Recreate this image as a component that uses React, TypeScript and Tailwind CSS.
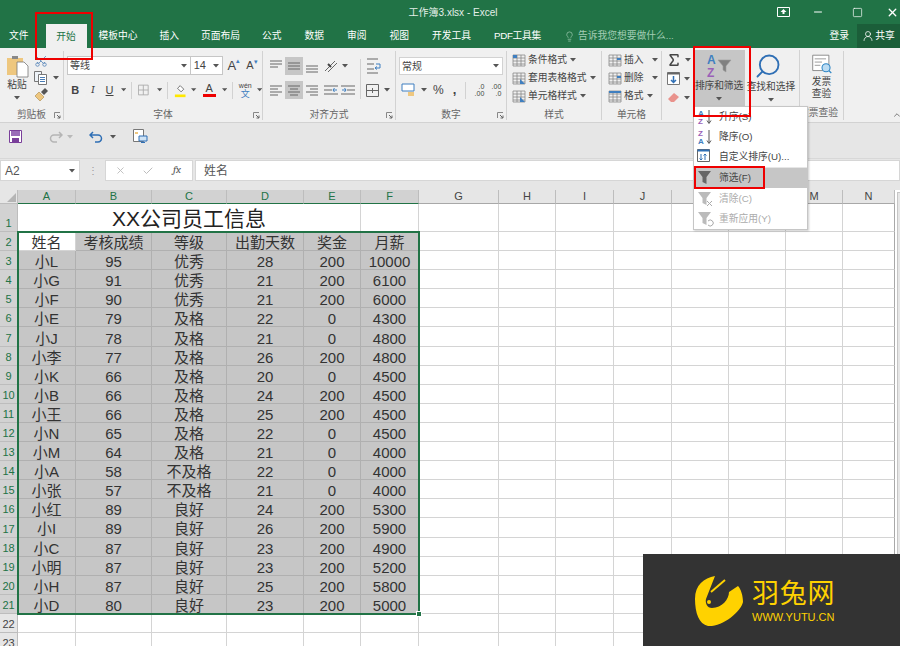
import React from 'react';
import { Scissors, Search, Lightbulb, UserRound, Sigma, X, Check, Minus, Square, ChevronUp } from 'lucide-react';

const rows = [
  ['小L', 95, '优秀', 28, 200, 10000], ['小G', 91, '优秀', 21, 200, 6100], ['小F', 90, '优秀', 21, 200, 6000],
  ['小E', 79, '及格', 22, 0, 4300], ['小J', 78, '及格', 21, 0, 4800], ['小李', 77, '及格', 26, 200, 4800],
  ['小K', 66, '及格', 20, 0, 4500], ['小B', 66, '及格', 24, 200, 4500], ['小王', 66, '及格', 25, 200, 4500],
  ['小N', 65, '及格', 22, 0, 4500], ['小M', 64, '及格', 21, 0, 4000], ['小A', 58, '不及格', 22, 0, 4000],
  ['小张', 57, '不及格', 21, 0, 4000], ['小红', 89, '良好', 24, 200, 5300], ['小I', 89, '良好', 26, 200, 5900],
  ['小C', 87, '良好', 23, 200, 4900], ['小明', 87, '良好', 23, 200, 5200], ['小H', 87, '良好', 25, 200, 5800],
  ['小D', 80, '良好', 23, 200, 5000],
];
const head = ['姓名', '考核成绩', '等级', '出勤天数', '奖金', '月薪'];
const cols = ['A', 'B', 'C', 'D', 'E', 'F', 'G', 'H', 'I', 'J', 'K', 'L', 'M', 'N'];

const Caret = ({ className = '' }: { className?: string }) => (
  <svg width="6" height="4" viewBox="0 0 6 4" className={className}><path d="M0 0h6L3 3.5z" fill="#555" /></svg>
);

const Launcher = () => (
  <svg width="7" height="7" viewBox="0 0 7 7" className="absolute right-[2px] bottom-[1px]">
    <path d="M.5 6V.5H6" fill="none" stroke="#888" />
    <path d="M3 3l3 3M6 3.500V6H3.500" fill="none" stroke="#666" />
  </svg>
);

const Group = ({ w, label, children, launcher = true }: { w: string; label: string; children: React.ReactNode; launcher?: boolean }) => (
  <div className={`relative flex flex-col h-[69px] shrink-0 border-r border-[#d2d2d2] mt-[3px] ${w}`}>
    <div className="flex-1 min-h-0">{children}</div>
    <div className="h-[12px] text-center leading-[14px] text-[#666]">{label}</div>
    {launcher && <Launcher />}
  </div>
);

const Lines = ({ kind, active = false }: { kind: string; active?: boolean }) => {
  const d: Record<string, string> = {
    top: 'M3 4h12M3 7h12M3 10h8',
    mid: 'M3 6h12M3 9h12M3 12h12',
    bot: 'M3 9h12M3 12h12M3 15h12',
    left: 'M3 5h12M3 8h8M3 11h12M3 14h8',
    center: 'M3 5h12M5 8h8M3 11h12M5 14h8',
    right: 'M3 5h12M7 8h8M3 11h12M7 14h8',
  };
  return (
    <div className={`w-[18px] h-[18px] ${active ? 'bg-[#c6c6c6]' : ''}`}>
      <svg width="18" height="18" viewBox="0 0 18 18"><path d={d[kind]} stroke="#666" fill="none" /></svg>
    </div>
  );
};

const MiniTable = ({ mark }: { mark: string }) => (
  <svg width="15" height="15" viewBox="0 0 15 15">
    <path d="M1 2h12v11H1zM1 5h12M1 8h12M1 11h12M5 2v11M9 2v11" fill="none" stroke="#888" strokeWidth=".8" />
    <path d={mark} fill="#3f7fc0" />
  </svg>
);

const SortAZ = () => (
  <svg width="18" height="18" viewBox="0 0 18 18">
    <text x="1" y="8" fontSize="8" fontWeight="700" fill="#3f7fc0" fontFamily="Liberation Sans">A</text>
    <text x="1" y="16" fontSize="8" fontWeight="700" fill="#9a5fb8" fontFamily="Liberation Sans">Z</text>
    <path d="M12 2v13M10 12.500l2 3 2-3" fill="none" stroke="#555" />
  </svg>
);

const SortZA = () => (
  <svg width="18" height="18" viewBox="0 0 18 18">
    <text x="1" y="8" fontSize="8" fontWeight="700" fill="#9a5fb8" fontFamily="Liberation Sans">Z</text>
    <text x="1" y="16" fontSize="8" fontWeight="700" fill="#3f7fc0" fontFamily="Liberation Sans">A</text>
    <path d="M12 2v13M10 12.500l2 3 2-3" fill="none" stroke="#555" />
  </svg>
);

const Funnel = ({ color, mark }: { color: string; mark?: string }) => (
  <svg width="18" height="18" viewBox="0 0 18 18">
    <path d="M1 2h13L9.500 8v7l-4-2V8z" fill={color} />
    {mark && <path d={mark} fill="none" stroke="#aaa" />}
  </svg>
);

const MenuItem = ({ icon, label, disabled = false, active = false, h }: { icon: React.ReactNode; label: string; disabled?: boolean; active?: boolean; h: string }) => (
  <div className={`flex items-center ${h} ${active ? 'bg-[#c6c6c6]' : ''} ${disabled ? 'text-[#ababab]' : 'text-[#444]'}`}>
    <div className="w-[25px] pl-[3px] shrink-0">{icon}</div>
    <span className="pt-[1px]">{label}</span>
  </div>
);

const StyleRow = ({ icon, label }: { icon: React.ReactNode; label: string }) => (
  <div className="flex items-center h-[18px] gap-[1px] whitespace-nowrap">
    {icon}
    <span>{label}</span>
    <Caret className="ml-[2px]" />
  </div>
);

export default function App() {
  return (
    <div
      className="relative w-[900px] h-[646px] overflow-hidden bg-white text-[9.750px] text-[#444]"
      style={{ fontFamily: '"Liberation Sans", "Noto Sans CJK SC", sans-serif' }}
    >
      {/* title bar */}
      <div className="relative h-[24px] bg-[#217346] flex items-center justify-center text-[#e4efe8]">
        <span className="ml-[6px] text-[10px]">工作簿3.xlsx - Excel</span>
        <div className="absolute right-0 top-0 h-full flex items-center text-white">
          <svg width="13" height="10" viewBox="0 0 13 10" className="mr-[22px]">
            <path d="M.5.5h12v9H.5z" fill="none" stroke="#fff" />
            <path d="M6.500 2l3 3h-6zM5.500 5h2v2h-2z" fill="#fff" />
          </svg>
          <Minus size={12} strokeWidth={2} className="mr-[28px]" />
          <Square size={11} strokeWidth={1.500} className="mr-[23px]" />
          <X size={13} strokeWidth={2.500} className="mr-[1px]" />
        </div>
      </div>

      {/* tabs */}
      <div className="relative h-[24px] bg-[#217346] flex items-center text-white pl-[9px] whitespace-nowrap">
        <span>文件</span>
        <div className="ml-[17px] h-full w-[41px] pt-[3px] bg-[#f0f0f0] text-[#217346] flex items-center justify-center">开始</div>
        <span className="ml-[12px]">模板中心</span>
        <span className="ml-[22px]">插入</span>
        <span className="ml-[22px]">页面布局</span>
        <span className="ml-[22px]">公式</span>
        <span className="ml-[23px]">数据</span>
        <span className="ml-[23px]">审阅</span>
        <span className="ml-[23px]">视图</span>
        <span className="ml-[23px]">开发工具</span>
        <span className="ml-[23px] tracking-[-0.300px]">PDF工具集</span>
        <div className="ml-[23px] flex items-center gap-[3px] text-[#a3cdb4]">
          <Lightbulb size={11} strokeWidth={1.500} />
          <span>告诉我您想要做什么...</span>
        </div>
        <div className="absolute right-0 top-0 h-full flex items-center">
          <span className="mr-[8px]">登录</span>
          <div className="h-full w-[43px] bg-[#1b5e39] flex items-center justify-center gap-[1px]">
            <UserRound size={12} strokeWidth={1.500} />
            <span>共享</span>
          </div>
        </div>
      </div>

      {/* ribbon */}
      <div className="relative h-[75px] bg-[#f0f0f0] border-b border-[#d2d2d2] flex items-start whitespace-nowrap">
        <Group w="w-[64px]" label="剪贴板">
          <div className="flex pl-[5px] pt-[3px]">
            <div className="flex flex-col items-center w-[24px]">
              <svg width="23" height="24" viewBox="0 0 23 24">
                <path d="M1 4h16v17H1z" fill="#eec77f" />
                <path d="M6 2h6v3H6z" fill="#888" />
                <path d="M11 8h7l4 4v11H11z" fill="#fff" stroke="#777" strokeWidth=".8" />
              </svg>
              <span className="mt-[1px] leading-[12px]">粘贴</span>
              <Caret className="mt-[5px]" />
            </div>
            <div className="ml-[5px] flex flex-col gap-[3px] pt-[0px]">
              <Scissors size={14} strokeWidth={1.300} className="text-[#4a7db5] rotate-[-90deg]" />
              <div className="flex items-center gap-[6px]">
                <svg width="13" height="14" viewBox="0 0 13 14">
                  <path d="M.5.5h7v10h-7z" fill="#eef3f8" stroke="#777" />
                  <path d="M4.500 3.500h8v10h-8z" fill="#fff" stroke="#777" />
                  <path d="M6 6.500h5M6 8.500h5M6 10.500h5" stroke="#4a7db5" />
                </svg>
                <Caret />
              </div>
              <svg width="14" height="14" viewBox="0 0 14 14">
                <path d="M1 8l4-4 5 5-4 4z" fill="#eec77f" stroke="#a8864a" strokeWidth=".6" />
                <path d="M7 4l4-4 3 3-4 4z" fill="#555" />
              </svg>
            </div>
          </div>
        </Group>

        <Group w="w-[199px]" label="字体">
          <div className="flex items-center pl-[3px] pt-[3px] h-[26px]">
            <div className="w-[125px] h-[19px] bg-white border border-[#c6c6c6] flex items-center justify-between pl-[2px] pr-[3px] text-[10px]">
              <span>等线</span>
              <Caret />
            </div>
            <div className="w-[33px] h-[19px] bg-white border border-l-0 border-[#c6c6c6] flex items-center justify-between pl-[3px] pr-[3px] text-[11px]">
              <span>14</span>
              <Caret />
            </div>
            <div className="ml-[4px] flex items-baseline w-[18px] text-[13px] text-[#444]">A<span className="text-[#3f7fc0] text-[7px] self-start">▴</span></div>
            <div className="ml-[1px] flex items-baseline w-[16px] text-[11px] text-[#444]">A<span className="text-[#3f7fc0] text-[7px] self-start">▾</span></div>
          </div>
          <div className="flex items-center pl-[6px] h-[26px] text-[11px]">
            <b className="w-[12px] text-center">B</b>
            <i className="ml-[7px] w-[12px] text-center font-serif">I</i>
            <u className="ml-[6px] w-[12px] text-center">U</u>
            <Caret className="ml-[6px]" />
            <div className="ml-[5px] w-px h-[17px] bg-[#d2d2d2]" />
            <svg width="12" height="12" viewBox="0 0 12 12" className="ml-[6px]"><path d="M.5.500h11v11H.5zM6 .5v11M.5 6h11" fill="none" stroke="#aaa" /></svg>
            <Caret className="ml-[8px]" />
            <div className="ml-[5px] w-px h-[17px] bg-[#d2d2d2]" />
            <svg width="14" height="15" viewBox="0 0 14 15" className="ml-[6px]">
              <path d="M4 5l3-3 4 4-3 3z" fill="#fff" stroke="#666" />
              <path d="M1 12h12v3H1z" fill="#ffe800" />
            </svg>
            <Caret className="ml-[5px]" />
            <div className="ml-[6px] w-[13px] h-[16px] flex flex-col items-center">
              <span className="leading-[12px] text-[11px]">A</span>
              <div className="w-[13px] h-[3px] bg-[#ee0000]" />
            </div>
            <Caret className="ml-[6px]" />
            <div className="ml-[5px] w-px h-[17px] bg-[#d2d2d2]" />
            <div className="ml-[6px] w-[14px] flex flex-col items-center leading-[8px] text-[7px]">
              <span>wén</span>
              <span className="text-[#3f7fc0] text-[9px]">文</span>
            </div>
            <Caret className="ml-[5px]" />
          </div>
        </Group>

        <Group w="w-[133px]" label="对齐方式">
          <div className="flex pl-[4px] pt-[6px]">
            <div className="grid grid-cols-[18px_18px_18px] gap-y-[6px]">
              <Lines kind="top" /><Lines kind="mid" active /><Lines kind="bot" />
              <Lines kind="left" /><Lines kind="center" active /><Lines kind="right" />
            </div>
            <div className="ml-[3px] flex flex-col gap-[6px]">
              <div className="flex items-center gap-[3px] h-[18px]">
                <svg width="15" height="14" viewBox="0 0 15 14"><path d="M1 12L11 2M4 13l9-9" stroke="#666" fill="none" /><path d="M4 5l3 3" stroke="#444" strokeWidth="2" /></svg>
                <Caret />
              </div>
              <div className="flex items-center gap-[3px] h-[18px]">
                <svg width="14" height="12" viewBox="0 0 14 12"><path d="M0 2h14M0 6h8M0 10h14" stroke="#666" /><path d="M13 6H9M10.500 4L9 6l1.500 2" stroke="#3f7fc0" fill="none" /></svg>
                <svg width="14" height="12" viewBox="0 0 14 12"><path d="M0 2h14M6 6h8M0 10h14" stroke="#666" /><path d="M1 6h4M3.500 4L5 6 3.500 8" stroke="#3f7fc0" fill="none" /></svg>
              </div>
            </div>
            <div className="ml-[5px] mt-[2px] h-[40px] w-px bg-[#d2d2d2]" />
            <div className="ml-[5px] flex flex-col gap-[6px]">
              <svg width="16" height="18" viewBox="0 0 16 18"><path d="M1 2h11M1 7h7M1 12h7M1 16h11" stroke="#666" fill="none" /><path d="M10 7h4v4h-5M11 9.500l-2 1.500 2 1.500" stroke="#3f7fc0" fill="none" /></svg>
              <div className="flex items-center gap-[5px] h-[18px]">
                <svg width="13" height="13" viewBox="0 0 13 13"><path d="M.5.500h12v12H.5zM.5 6.500h12M6.500 4v5" fill="none" stroke="#666" /></svg>
                <Caret />
              </div>
            </div>
          </div>
        </Group>

        <Group w="w-[111px]" label="数字">
          <div className="pl-[3px] pt-[6px]">
            <div className="w-[104px] h-[18px] bg-white border border-[#d2d2d2] flex items-center justify-between pl-[2px] pr-[3px] text-[10px]">
              <span>常规</span>
              <Caret />
            </div>
            <div className="flex items-center mt-[6px] h-[18px]">
              <svg width="15" height="14" viewBox="0 0 15 14" className="ml-[2px]"><path d="M1 1h12v7H1z" fill="#fff" stroke="#3f7fc0" /><path d="M7 9h6v4H7z" fill="#eec77f" /></svg>
              <Caret className="ml-[5px]" />
              <span className="ml-[6px] text-[12px]">%</span>
              <span className="ml-[9px] text-[13px] font-bold leading-[10px]">,</span>
              <div className="ml-[9px] w-px h-[17px] bg-[#d2d2d2]" />
              <span className="ml-[6px] w-[12px] text-[7px] leading-[7px] text-right">.0<br />.00</span>
              <span className="ml-[5px] w-[12px] text-[7px] leading-[7px] text-right">.00<br />.0</span>
            </div>
          </div>
        </Group>

        <Group w="w-[95px]" label="样式" launcher={false}>
          <div className="pl-[5px] flex flex-col">
            <StyleRow icon={<MiniTable mark="M1 2h4v3H1z" />} label="条件格式" />
            <StyleRow icon={<MiniTable mark="M8 8l5 5H8z" />} label="套用表格格式" />
            <StyleRow icon={<MiniTable mark="M8 8l5 5H8z" />} label="单元格样式" />
          </div>
        </Group>

        <Group w="w-[60px]" label="单元格" launcher={false}>
          <div className="pl-[6px] flex flex-col">
            <div className="flex items-center h-[18px] gap-[1px]"><MiniTable mark="M9 5h4v2H9z" /><span>插入</span><Caret className="ml-[7px]" /></div>
            <div className="flex items-center h-[18px] gap-[1px]"><MiniTable mark="M9 5h4v2H9z" /><span>删除</span><Caret className="ml-[7px]" /></div>
            <div className="flex items-center h-[18px] gap-[1px]"><MiniTable mark="M1 2h12v2H1z" /><span>格式</span><Caret className="ml-[2px]" /></div>
          </div>
        </Group>

        <div className="relative h-[69px] w-[138px] shrink-0 border-r border-[#d2d2d2] mt-[2px] flex">
          <div className="w-[31px] pl-[4px] pt-[1px] flex flex-col">
            <div className="flex items-center h-[18px] gap-[3px]"><Sigma size={16} strokeWidth={2.200} /><Caret /></div>
            <div className="flex items-center h-[18px] gap-[4px] pl-[1px] pt-[1px]">
              <svg width="13" height="13" viewBox="0 0 13 13"><path d="M.5.500h12v12H.5z" fill="#fff" stroke="#777" /><path d="M.5.500h12v2H.5z" fill="#666" /><path d="M6.500 4v6.500M4 8l2.500 2.500L9 8" stroke="#2f6fb5" strokeWidth="1.500" fill="none" /></svg>
              <Caret />
            </div>
            <div className="flex items-center h-[18px] gap-[4px] pl-[1px] pt-[3px]">
              <svg width="13" height="11" viewBox="0 0 13 11"><path d="M1 7l6-6 5 4-5 5H4z" fill="#e9928c" /></svg>
              <Caret />
            </div>
          </div>
          <div className="w-[52px] h-[56px] bg-[#c6c6c6] flex flex-col items-center pt-[3px]">
            <svg width="26" height="26" viewBox="0 0 26 26">
              <text x="1" y="11" fontSize="12" fontWeight="700" fill="#3f7fc0" fontFamily="Liberation Sans">A</text>
              <text x="1" y="24" fontSize="12" fontWeight="700" fill="#9a5fb8" fontFamily="Liberation Sans">Z</text>
              <path d="M12 7h13l-5 6v6l-3-2v-4z" fill="#808080" stroke="#9c9c9c" strokeWidth=".6" />
            </svg>
            <span className="mt-[1px] leading-[12px] tracking-[-0.100px]">排序和筛选</span>
            <Caret className="mt-[5px]" />
          </div>
          <div className="w-[52px] flex flex-col items-center pt-[2px]">
            <Search size={28} strokeWidth={1.600} className="mr-[6px] mb-[1px] text-[#2f6fb5] scale-x-[-1]" />
            <span className="leading-[12px]">查找和选择</span>
            <Caret className="mt-[5px]" />
          </div>
        </div>

        <div className="relative h-[69px] w-[44px] shrink-0 border-r border-[#d2d2d2] mt-[3px] flex flex-col items-center">
          <svg width="26" height="26" viewBox="0 0 26 26" className="mt-[3px]">
            <path d="M1.500 1.500h20v19h-20z" fill="#fff" stroke="#777" />
            <path d="M4 6h14M4 10h9M4 14h7" stroke="#888" />
            <circle cx="18" cy="17" r="5" fill="#bcdcf3" stroke="#2f86c5" strokeWidth="1.300" />
            <path d="M21.500 20.500l3 3" stroke="#2f86c5" strokeWidth="1.500" />
          </svg>
          <span className="mt-[1px] leading-[12px]">发票</span>
          <span className="leading-[12px]">查验</span>
          <span className="mt-[5px] leading-[15px] text-[#666] ml-[-6px]">发票查验</span>
        </div>
        <ChevronUp size={10} strokeWidth={2} className="absolute right-[-2px] bottom-[2px] text-[#666]" />
      </div>

      {/* quick access */}
      <div className="h-[36px] bg-[#e6e6e6] border-b border-[#d8d8d8] flex items-center pl-[9px] pb-[8px]">
        <svg width="13" height="13" viewBox="0 0 13 13">
          <path d="M.5.500h12v12H.5z" fill="#fff" stroke="#7a3f9a" />
          <path d="M2 1h9v5H2z" fill="#9a6cb8" />
          <path d="M3 8h7v4H3z" fill="#7a3f9a" />
        </svg>
        <svg width="14" height="12" viewBox="0 0 14 12" className="ml-[27px]"><path d="M13 4H5a3.500 3.500 0 0 0 0 7h3M10 1l3 3-3 3" fill="none" stroke="#b5b5b5" strokeWidth="1.500" /></svg>
        <Caret className="ml-[4px] opacity-30" />
        <svg width="14" height="12" viewBox="0 0 14 12" className="ml-[16px]"><path d="M1 4h8a3.500 3.500 0 0 1 0 7H6M4 1L1 4l3 3" fill="none" stroke="#2f6fb5" strokeWidth="1.500" /></svg>
        <Caret className="ml-[7px]" />
        <svg width="15" height="15" viewBox="0 0 15 15" className="ml-[17px]">
          <path d="M.5.500h10v12H.5z" fill="#fff" stroke="#777" />
          <path d="M6 7h8v5H6z" fill="#cfe3f5" stroke="#2f6fb5" />
          <path d="M8 13.500h4" stroke="#2f6fb5" />
          <path d="M2 3h3v2H2z" fill="#eec77f" />
        </svg>
      </div>

      {/* formula bar */}
      <div className="h-[23px] bg-[#e6e6e6] flex items-stretch py-[1px]">
        <div className="w-[80px] bg-white border border-[#d6d6d6] flex items-center justify-between pl-[4px] pr-[4px] text-[12px] text-[#555]">
          <span>A2</span>
          <Caret />
        </div>
        <div className="w-[25px] flex items-center justify-center text-[#999] text-[10px]">⋮</div>
        <div className="w-[88px] bg-white border border-[#d6d6d6] flex items-center text-[#bdbdbd]">
          <X size={11} className="ml-[9px]" />
          <Check size={12} className="ml-[16px]" />
          <span className="ml-[19px] font-serif italic text-[11px] text-[#555]">fx</span>
        </div>
        <div className="ml-[2px] flex-1 bg-white border border-[#d6d6d6] flex items-center pl-[8px] text-[12px] text-[#555]">姓名</div>
      </div>

      {/* sheet */}
      <div className="h-[8px] bg-[#e6e6e6]" />
      <div className="relative flex">
        <div className="grid grid-cols-[18px_58px_76px_75px_77px_57px_58px_80px_57px_58px_58px_57px_57px_57px_52px] grid-rows-[14px_28px] auto-rows-[19.100px] w-[895px] text-[15px] text-[#333]">
          <div className="bg-[#e6e6e6] border-r border-b border-[#bdbdbd] flex items-end justify-end pr-[1px] pb-[1px]">
            <svg width="9" height="9" viewBox="0 0 9 9"><path d="M9 0v9H0z" fill="#b5b5b5" /></svg>
          </div>
          {cols.map((c, i) => (
            <div key={c} className={`border-r border-[#bdbdbd] flex items-center justify-center text-[11px] border-b ${i < 6 ? 'bg-[#d2d2d2] text-[#217346] border-b-[#217346]' : 'bg-[#e6e6e6] text-[#444] border-b-[#a8a8a8]'}`}>{c}</div>
          ))}

          <RowHead n={1} selected />
          <div className="col-span-5 bg-white border-r border-b border-[#d4d4d4] flex items-center justify-center pt-[2px] text-[21px] leading-none text-[#222]">XX公司员工信息</div>
          <Empty />
          <Blank />

          <RowHead n={2} selected />
          {head.map((h, i) => (
            <div key={h} className={`flex items-center justify-center pt-[3px] leading-none border-r border-b ${i === 0 ? 'bg-white border-[#d4d4d4]' : 'bg-[#c6c6c6] border-[#b0b0b0]'}`}>{h}</div>
          ))}
          <Blank />

          {rows.map((r, idx) => (
            <React.Fragment key={idx}>
              <RowHead n={idx + 3} selected />
              {r.map((v, i) => (
                <div key={i} className="bg-[#c6c6c6] border-r border-b border-[#b0b0b0] flex items-center justify-center pt-[3px] leading-none">{v}</div>
              ))}
              <Blank />
            </React.Fragment>
          ))}

          {[22, 23].map((n) => (
            <React.Fragment key={n}>
              <RowHead n={n} />
              <Empty /><Empty /><Empty /><Empty /><Empty /><Empty />
              <Blank />
            </React.Fragment>
          ))}
        </div>
        {/* scrollbar strip */}
        <div className="w-[5px] bg-white">
          <div className="mt-[2px] ml-[2px] h-full bg-[#e6e6e6] border-l border-t border-[#c6c6c6]" />
        </div>

        {/* selection outline */}
        <div className="absolute left-[17px] top-[41px] w-[403px] h-[384px] border-2 border-[#217346] pointer-events-none">
          <div className="absolute -right-[4px] -bottom-[4px] w-[6px] h-[6px] bg-[#217346] border border-white" />
        </div>
      </div>

      {/* sort menu */}
      <div className="absolute left-[693px] top-[106px] w-[115px] h-[124px] bg-white border border-[#c6c6c6] shadow-[1px_1px_2px_rgba(0,0,0,0.2)] whitespace-nowrap">
        <MenuItem h="h-[20px]" icon={<SortAZ />} label="升序(S)" />
        <MenuItem h="h-[20px]" icon={<SortZA />} label="降序(O)" />
        <MenuItem h="h-[20px]" icon={
          <svg width="17" height="17" viewBox="0 0 17 17">
            <path d="M.5.500h12v12H.5z" fill="#fff" stroke="#666" />
            <path d="M.5.500h12v2H.5z" fill="#2f6fb5" />
            <path d="M4 5v6M2.500 9.500L4 11l1.500-1.500M8 11V5M6.500 6.500L8 5l1.500 1.500" fill="none" stroke="#2f6fb5" />
          </svg>
        } label="自定义排序(U)..." />
        <div className="h-[1px] bg-[#e6e6e6]" />
        <MenuItem h="h-[20px]" active icon={<Funnel color="#666" />} label="筛选(F)" />
        <MenuItem h="h-[21px]" disabled icon={<Funnel color="#bbb" mark="M10 11l5 5M15 11l-5 5" />} label="清除(C)" />
        <MenuItem h="h-[20px]" disabled icon={<Funnel color="#bbb" mark="M11 11a3 3 0 1 1 0 4" />} label="重新应用(Y)" />
      </div>

      {/* annotation boxes */}
      <div className="absolute left-[35px] top-[12px] w-[58px] h-[48px] border-2 border-[#ee0000] pointer-events-none" />
      <div className="absolute left-[693px] top-[46px] w-[58px] h-[71px] border-2 border-[#ee0000] pointer-events-none" />
      <div className="absolute left-[694px] top-[166px] w-[71px] h-[23px] border-2 border-[#ee0000] pointer-events-none" />

      {/* watermark */}
      <div className="absolute left-[643px] top-[554px] w-[257px] h-[92px] bg-[#333333] flex items-center pl-[51px] pt-[1px]">
        <svg width="50" height="52" viewBox="0 0 50 52" className="shrink-0">
          <path d="M21 1 C10 3 1 10 1 24 C1 38 5 49 14 51 C28 52 47 37 49 27 C49 21 47 14 44 11 L35 17 C35 24 28 33 18 33 C13 33 11 28 12 24 Z" fill="#ffd200" />
          <path d="M17 17 L31 5" stroke="#ffd200" strokeWidth="2" />
          <circle cx="15" cy="27" r="2" fill="#ffd200" />
        </svg>
        <div className="ml-[8px] flex flex-col text-[#ffd200]">
          <span className="text-[27px] leading-[32px] tracking-[0.800px]" style={{ fontFamily: '"Noto Sans CJK SC", sans-serif' }}>羽兔网</span>
          <span className="text-[11px] leading-[16px] mt-[1px] whitespace-nowrap">WWW.YUTU.CN</span>
        </div>
      </div>
    </div>
  );
}

function RowHead({ n, selected = false }: { n: number; selected?: boolean }) {
  return (
    <div className={`border-r border-b border-[#bdbdbd] flex items-end justify-center text-[11px] leading-[16px] ${selected ? 'bg-[#d2d2d2] text-[#217346]' : 'bg-[#e6e6e6] text-[#444]'}`}>{n}</div>
  );
}

function Empty() {
  return <div className="bg-white border-r border-b border-[#d4d4d4]" />;
}

// rest of a row, from G to the right edge
function Blank() {
  return (
    <>
      <Empty /><Empty /><Empty /><Empty /><Empty /><Empty /><Empty />
      <div className="bg-white border-b border-r border-[#a8a8a8] border-b-[#d4d4d4]" />
    </>
  );
}
